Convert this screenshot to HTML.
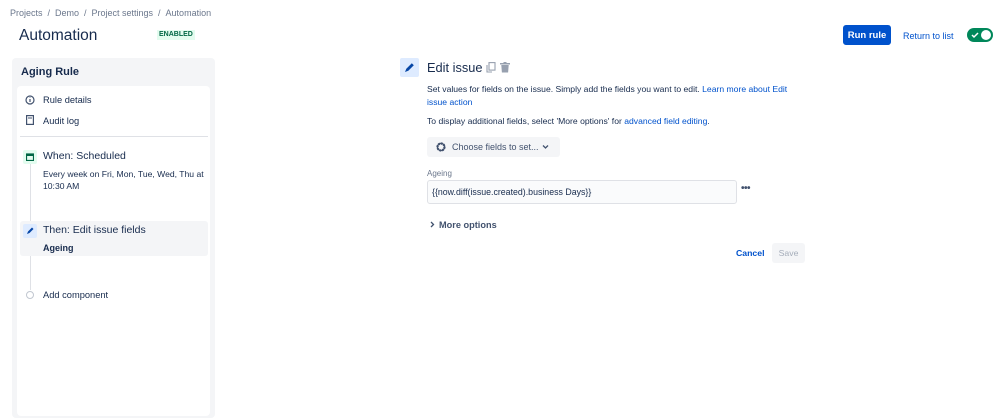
<!DOCTYPE html>
<html><head><style>
*{box-sizing:border-box;margin:0;padding:0}
body{width:999px;height:411px;overflow:hidden;background:#fff;font-family:"Liberation Sans",sans-serif;color:#172b4d;position:relative}
.a{position:absolute;white-space:nowrap}
.link{color:#0052cc}
</style></head><body>
<div class="a" style="left:10px;top:8px;font-size:9px;color:#6b778c">Projects &nbsp;/ &nbsp;Demo &nbsp;/ &nbsp;Project settings &nbsp;/ &nbsp;Automation</div>
<div class="a" style="left:19px;top:27px;font-size:15.5px;color:#172b4d">Automation</div>
<div class="a" style="left:157px;top:30px;height:10px;padding:0 2px;background:#e3fcef;color:#006644;font-size:7px;font-weight:bold;line-height:10px">ENABLED</div>

<div class="a" style="left:843px;top:25px;width:48px;height:20px;background:#0052cc;border-radius:3px;color:#fff;font-size:9.5px;font-weight:bold;text-align:center;padding-top:5px;line-height:11px">Run rule</div>
<div class="a link" style="left:903px;top:30px;font-size:9px;line-height:12px">Return to list</div>
<div class="a" style="left:967px;top:28px;width:26px;height:14px;background:#00875a;border-radius:7px">
<svg style="position:absolute;left:4px;top:3px" width="8" height="8" viewBox="0 0 8 8"><path d="M1 4l2 2 4-4" stroke="#fff" stroke-width="1.5" fill="none"/></svg>
<div style="position:absolute;right:2px;top:2px;width:10px;height:10px;border-radius:50%;background:#fff"></div></div>

<div class="a" style="left:12px;top:58px;width:203px;height:360px;background:#f4f5f7;border-radius:4px"></div>
<div class="a" style="left:21px;top:66px;font-size:11px;font-weight:bold">Aging Rule</div>
<div class="a" style="left:17px;top:86px;width:193px;height:330px;background:#fff;border-radius:4px"></div>
<svg class="a" style="left:25px;top:95px" width="10" height="10"><circle cx="5" cy="5" r="4" stroke="#42526e" fill="none" stroke-width="1.2"/><path d="M5 4v3M5 2.5v.5" stroke="#42526e" stroke-width="1.2"/></svg>
<div class="a" style="left:43px;top:95px;font-size:9.3px">Rule details</div>
<svg class="a" style="left:26px;top:115px" width="8" height="10"><rect x="0.6" y="0.6" width="6.8" height="8.8" stroke="#42526e" fill="none" stroke-width="1.2"/><path d="M2 3h4" stroke="#42526e"/></svg>
<div class="a" style="left:43px;top:116px;font-size:9.3px">Audit log</div>
<div class="a" style="left:20px;top:136px;width:188px;height:1px;background:#dfe1e6"></div>
<div class="a" style="left:30px;top:163px;width:1px;height:127px;background:#dfe1e6"></div>
<div class="a" style="left:23px;top:150px;width:14px;height:14px;background:#e3fcef;border-radius:2px"></div>
<svg class="a" style="left:26px;top:153px" width="8" height="8"><rect x="0.5" y="1" width="7" height="6.5" fill="none" stroke="#006644" stroke-width="1.2"/><rect x="0.5" y="1" width="7" height="2" fill="#006644"/></svg>
<div class="a" style="left:43px;top:150px;font-size:10.5px">When: Scheduled</div>
<div class="a" style="left:43px;top:168px;font-size:8.6px;line-height:12px">Every week on Fri, Mon, Tue, Wed, Thu at<br>10:30 AM</div>
<div class="a" style="left:20px;top:221px;width:188px;height:35px;background:#f4f5f7;border-radius:3px"></div>
<div class="a" style="left:23px;top:224px;width:14px;height:14px;background:#deebff;border-radius:2px"></div>
<svg class="a" style="left:25px;top:226px" width="10" height="10"><path d="M2 8l1-2.5 4-4 1.5 1.5-4 4z" fill="#0747a6"/></svg>
<div class="a" style="left:43px;top:224px;font-size:10.5px">Then: Edit issue fields</div>
<div class="a" style="left:43px;top:243px;font-size:9px;font-weight:bold">Ageing</div>
<div class="a" style="left:26px;top:291px;width:8px;height:8px;border:1px solid #c1c7d0;border-radius:50%;background:#fff"></div>
<div class="a" style="left:43px;top:290px;font-size:9.3px">Add component</div>

<div class="a" style="left:400px;top:58px;width:19px;height:19px;background:#deebff;border-radius:2px"></div>
<svg class="a" style="left:403px;top:61px" width="13" height="13"><path d="M2 11l1.3-3.3 5.5-5.5 2 2-5.5 5.5z" fill="#0747a6"/></svg>
<div class="a" style="left:427px;top:60px;font-size:12.8px">Edit issue</div>
<svg class="a" style="left:486px;top:62px" width="10" height="11"><rect x="3" y="0.6" width="6" height="7.5" fill="none" stroke="#97a0af" stroke-width="1.1"/><path d="M1 3v7h5" fill="none" stroke="#97a0af" stroke-width="1.1"/></svg>
<svg class="a" style="left:500px;top:62px" width="10" height="11"><rect x="0" y="1" width="10" height="1.5" fill="#97a0af"/><rect x="3.5" y="0" width="3" height="1" fill="#97a0af"/><path d="M1.3 3h7.4l-.6 7.5h-6.2z" fill="#97a0af"/></svg>
<div class="a" style="left:427px;top:83px;font-size:8.6px;line-height:12.5px">Set values for fields on the issue. Simply add the fields you want to edit. <span class="link">Learn more about Edit</span><br><span class="link">issue action</span></div>
<div class="a" style="left:427px;top:116px;font-size:8.6px">To display additional fields, select 'More options' for <span class="link">advanced field editing</span>.</div>
<div class="a" style="left:427px;top:137px;width:133px;height:20px;background:#f4f5f7;border-radius:3px"></div>
<svg class="a" style="left:435px;top:141px" width="12" height="12" viewBox="0 0 12 12"><circle cx="6" cy="6" r="3.5" fill="none" stroke="#42526e" stroke-width="2.2" stroke-dasharray="1.8 0.9"/><circle cx="6" cy="6" r="3.6" fill="none" stroke="#42526e" stroke-width="1.3"/></svg>
<div class="a" style="left:452px;top:142px;font-size:9px;color:#42526e">Choose fields to set...</div>
<svg class="a" style="left:542px;top:144px" width="7" height="6"><path d="M1 1.5l2.5 2.5 2.5-2.5" stroke="#42526e" stroke-width="1.3" fill="none"/></svg>
<div class="a" style="left:427px;top:169px;font-size:8px;color:#6b778c">Ageing</div>
<div class="a" style="left:427px;top:180px;width:310px;height:24px;background:#fafbfc;border:1.5px solid #dfe1e6;border-radius:3px"></div>
<div class="a" style="left:432px;top:187px;font-size:8.8px">{{now.diff(issue.created).business Days}}</div>
<div class="a" style="left:741px;top:183px;font-size:10px;font-weight:bold;color:#42526e;letter-spacing:-0.5px">•••</div>
<svg class="a" style="left:430px;top:221px" width="5" height="7"><path d="M1 1l2.5 2.5L1 6" stroke="#42526e" stroke-width="1.3" fill="none"/></svg>
<div class="a" style="left:439px;top:220px;font-size:9.2px;font-weight:bold;color:#42526e">More options</div>
<div class="a link" style="left:736px;top:248px;font-size:8.7px;font-weight:bold">Cancel</div>
<div class="a" style="left:772px;top:243px;width:33px;height:20px;background:#f4f5f7;border-radius:3px;color:#a5adba;font-size:8.7px;text-align:center;line-height:20px">Save</div>
</body></html>
